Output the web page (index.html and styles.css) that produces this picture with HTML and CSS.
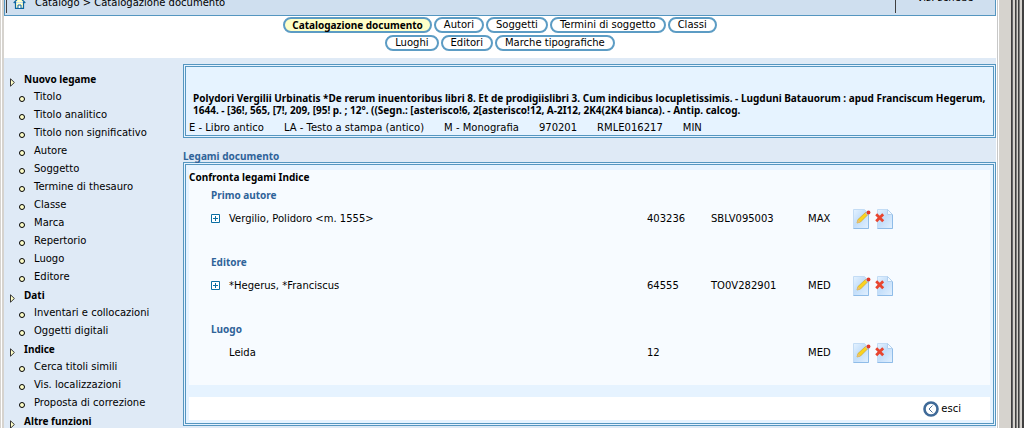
FILE: index.html
```html
<!DOCTYPE html>
<html lang="it">
<head>
<meta charset="utf-8">
<title>Catalogazione documento</title>
<link rel="stylesheet" href="styles.css">
</head>
<body>
<svg class="defs" aria-hidden="true">
  <defs>
    <linearGradient id="paper" x1="0" y1="0" x2="1" y2="1"><stop offset="0" stop-color="#e6f3ff"/><stop offset=".45" stop-color="#c3defa"/><stop offset="1" stop-color="#e2f0fe"/></linearGradient>
    <symbol id="edit" viewBox="0 0 18 20">
      <path d="M.5.5h11l4 4v15H.5z" fill="url(#paper)" stroke="#c3dcf5"/>
      <path d="M.5 19.5h15v-14" fill="none" stroke="#8fbce8"/>
      <path d="M4 14l1-3.500 7.500-7 2.500 2-7.500 7.500z" fill="#fbd31e" stroke="#d0a52b" stroke-width=".7"/>
      <path d="M4 14l1-3.500 2.500 2.500z" fill="#e9c07a"/>
      <path d="M13 3.500l2 2" stroke="#b9c4d4" stroke-width="2"/>
      <circle cx="15.500" cy="3.500" r="1.900" fill="#e23a2a"/>
    </symbol>
    <symbol id="delete" viewBox="0 0 18 20">
      <path d="M2.500.5h10l5 5v14h-15z" fill="url(#paper)" stroke="#c3dcf5"/>
      <path d="M2.500 19.500h15v-14" fill="none" stroke="#8fbce8"/>
      <path d="M12.500.5v5h5z" fill="#f5faff" stroke="#b3d1ef"/>
      <path d="M1.200 5.200l7 7M8.200 5.200l-7 7" stroke="#e8452f" stroke-width="2.800"/>
    </symbol>
    <symbol id="plus" viewBox="0 0 9 9"><path d="M.5.5h8v8h-8z" fill="#fff" stroke="#0b6ea3"/><path d="M2 4.500h5M4.500 2v5" stroke="#0b6ea3"/></symbol>
    <symbol id="arrow" viewBox="0 0 5 9"><path d="M.5.8v7.400L4.400 4.500z" fill="#ffffc8" stroke="#222" stroke-width=".9"/></symbol>
  </defs>
</svg>
<div class="window">
  <div class="page">
    <header class="topbar">
      <nav class="crumbs" aria-label="Percorso">
        <svg class="home" viewBox="0 0 13 14" aria-hidden="true"><path d="M.7 8L6.500 2l5.800 6M2.500 7v6.300h8V7" fill="#ffffc8" stroke="#0a65a0" stroke-width="1.200"/><path d="M5 13v-3h3v3" fill="#fff" stroke="#0a65a0"/></svg>
        <span>Catalogo &gt; Catalogazione documento</span>
      </nav>
      <div class="library">Vis. schede</div>
    </header>
    <nav class="tabs" aria-label="Sezioni">
      <div class="tabrow"><button class="tab active">Catalogazione documento</button><button class="tab">Autori</button><button class="tab">Soggetti</button><button class="tab">Termini di soggetto</button><button class="tab">Classi</button></div>
      <div class="tabrow"><button class="tab">Luoghi</button><button class="tab">Editori</button><button class="tab">Marche tipografiche</button></div>
    </nav>
    <div class="body">
      <nav class="side" aria-label="Funzioni">
        <ul class="menu">
          <li class="group"><svg><use href="#arrow"/></svg>Nuovo legame</li>
          <li><a href="#">Titolo</a></li>
          <li><a href="#">Titolo analitico</a></li>
          <li><a href="#">Titolo non significativo</a></li>
          <li><a href="#">Autore</a></li>
          <li><a href="#">Soggetto</a></li>
          <li><a href="#">Termine di thesauro</a></li>
          <li><a href="#">Classe</a></li>
          <li><a href="#">Marca</a></li>
          <li><a href="#">Repertorio</a></li>
          <li><a href="#">Luogo</a></li>
          <li><a href="#">Editore</a></li>
          <li class="group"><svg><use href="#arrow"/></svg>Dati</li>
          <li><a href="#">Inventari e collocazioni</a></li>
          <li><a href="#">Oggetti digitali</a></li>
          <li class="group"><svg><use href="#arrow"/></svg>Indice</li>
          <li><a href="#">Cerca titoli simili</a></li>
          <li><a href="#">Vis. localizzazioni</a></li>
          <li><a href="#">Proposta di correzione</a></li>
          <li class="group"><svg><use href="#arrow"/></svg>Altre funzioni</li>
        </ul>
      </nav>
      <main class="main">
        <section class="frame record">
          <p class="title">Polydori Vergilii Urbinatis *De rerum inuentoribus libri 8. Et de prodigiislibri 3. Cum indicibus locupletissimis. - Lugduni Batauorum : apud Franciscum Hegerum,<br>1644. - [36!, 565, [7!, 209, [95! p. ; 12°. ((Segn.: [asterisco!6, 2[asterisco!12, A-2I12, 2K4(2K4 bianca). - Antip. calcog.</p>
          <p class="facts"><span>E - Libro antico</span><span>LA - Testo a stampa (antico)</span><span>M - Monografia</span><span>970201</span><span>RMLE016217</span><span>MIN</span></p>
        </section>
        <h1 class="heading">Legami documento</h1>
        <section class="frame links">
          <div class="sheet">
            <h2>Confronta legami Indice</h2>
            <h3>Primo autore</h3>
            <div class="row"><button class="toggle" aria-label="Espandi"><svg><use href="#plus"/></svg></button><span class="name">Vergilio, Polidoro &lt;m. 1555&gt;</span><span>403236</span><span>SBLV095003</span><span>MAX</span><span class="actions"><button aria-label="Modifica"><svg><use href="#edit"/></svg></button><button aria-label="Elimina"><svg><use href="#delete"/></svg></button></span></div>
            <h3>Editore</h3>
            <div class="row"><button class="toggle" aria-label="Espandi"><svg><use href="#plus"/></svg></button><span class="name">*Hegerus, *Franciscus</span><span>64555</span><span>TO0V282901</span><span>MED</span><span class="actions"><button aria-label="Modifica"><svg><use href="#edit"/></svg></button><button aria-label="Elimina"><svg><use href="#delete"/></svg></button></span></div>
            <h3>Luogo</h3>
            <div class="row"><span></span><span class="name">Leida</span><span>12</span><span></span><span>MED</span><span class="actions"><button aria-label="Modifica"><svg><use href="#edit"/></svg></button><button aria-label="Elimina"><svg><use href="#delete"/></svg></button></span></div>
          </div>
          <div class="footer"><button class="exit"><svg viewBox="0 0 16 16" aria-hidden="true"><circle cx="8" cy="8" r="6.500" fill="#fff" stroke="#3f6a98" stroke-width="2.600"/><path d="M9.500 4.500L6 8l3.500 3.500" fill="none" stroke="#4a6f98"/></svg>esci</button></div>
        </section>
      </main>
    </div>
  </div>
  <div class="edge"></div>
</div>
</body>
</html>
```
FILE: styles.css
```css
*, *::before { box-sizing: border-box; }
body { margin: 0; font: 10px/18px "DejaVu Sans", sans-serif; color: #000; background: #fff; }
button { margin: 0; padding: 0; border: 0; background: none; font: inherit; color: inherit; cursor: pointer; }
p, h1, h2, h3, ul { margin: 0; padding: 0; }
h1, h2, h3, .title, .group, .tab.active { font-family: "Noto Sans", sans-serif; font-size: 10px; font-weight: 700; }
a { color: inherit; text-decoration: none; }
.defs { position: absolute; width: 0; height: 0; }
.window { display: flex; height: 100vh; overflow: hidden; border-left: 1px solid #d6d3ce; }
.page { flex: 1; display: flex; flex-direction: column; min-width: 0; margin-left: 1px; border-left: 2px solid #d6d3ce; }
.edge { width: 28px; border-left: 1px solid #fff; background: linear-gradient(90deg, #c8c8c8 0 1px, #fff 1px 2px, #d6d3ce 2px 14px, #404040 14px 15px, #66666a 15px 16px, #d6d3ce 16px 18px, #404040 18px 19px, #808080 19px 20px, #d6d3ce 20px 21px, #404040 21px 22px, #808080 22px 23px, #d6d3ce 23px 25px, #404040 25px 27px); }
.topbar { flex: none; display: flex; align-items: flex-end; height: 16px; overflow: hidden; padding: 0 1px 2px; background: #cfdfef; border: solid #5596c0; border-width: 0 1px 1px; }
.crumbs { flex: 1; display: flex; align-items: flex-end; gap: 9px; height: 13px; padding-left: 6px; border-left: 1px solid #404040; }
.crumbs span { line-height: 20px; }
.home { width: 13px; height: 14px; margin-bottom: 4px; }
.library { width: 99px; height: 13px; display: flex; align-items: flex-end; justify-content: center; border-left: 1px solid #404040; line-height: 30px; }
.tabs { flex: none; display: flex; flex-direction: column; gap: 2px; padding: 1px 0 7px; }
.tabrow { display: flex; justify-content: center; gap: 2px; }
.tab { height: 16px; padding: 0 8px; line-height: 12px; border: 2px solid #5c9cc4; border-radius: 8px; background: #fff; }
.tab.active { padding: 0 7px; background: #ffffc8; }
.body { flex: 1; display: flex; background: #dfeaf6; min-height: 0; }
.side { flex: none; width: 179px; padding-top: 12px; }
.menu { list-style: none; }
.menu li { display: flex; align-items: center; height: 18px; padding-left: 15px; }
.menu li::before { content: ""; width: 6px; height: 6px; margin: 4px 9px 0 0; border: 1px solid #000; border-radius: 3px; background: #ffffc8; }
.menu .group { padding-left: 6px; }
.menu .group::before { content: none; }
.group svg { width: 5px; height: 9px; margin: 6px 9px 0 0; }
.main { flex: 1; min-width: 0; padding-top: 6px; }
.frame { border: 1px solid #5596c0; outline: 1px solid #5596c0; outline-offset: -3px; background: #e6f3ff; }
.record { height: 74px; padding: 27px 5px 0; white-space: nowrap; }
.title { padding-left: 4px; line-height: 12px; }
.facts { display: flex; gap: 20px; line-height: 24px; }
.heading { padding-top: 12px; line-height: 12px; color: #2f6399; }
.links { padding: 7px 5px 5px; }
.sheet { height: 215px; background: #f7fbff; }
h2 { padding-bottom: 2px; line-height: 14px; }
h3 { padding-left: 22px; line-height: 18px; color: #2f6399; }
.row { display: grid; grid-template-columns: 18px 1fr 64px 97px 45px 137px; align-items: center; height: 49px; padding: 0 0 20px 22px; }
.toggle { display: block; height: 9px; }
.toggle svg { display: block; width: 9px; height: 9px; }
.actions { display: flex; gap: 4px; }
.actions svg { display: block; width: 18px; height: 20px; }
.footer { display: flex; justify-content: flex-end; align-items: center; height: 23px; margin-top: 12px; padding-right: 29px; background: #fff; }
.exit { display: flex; align-items: center; gap: 2px; }
.exit svg { width: 16px; height: 16px; }
```
